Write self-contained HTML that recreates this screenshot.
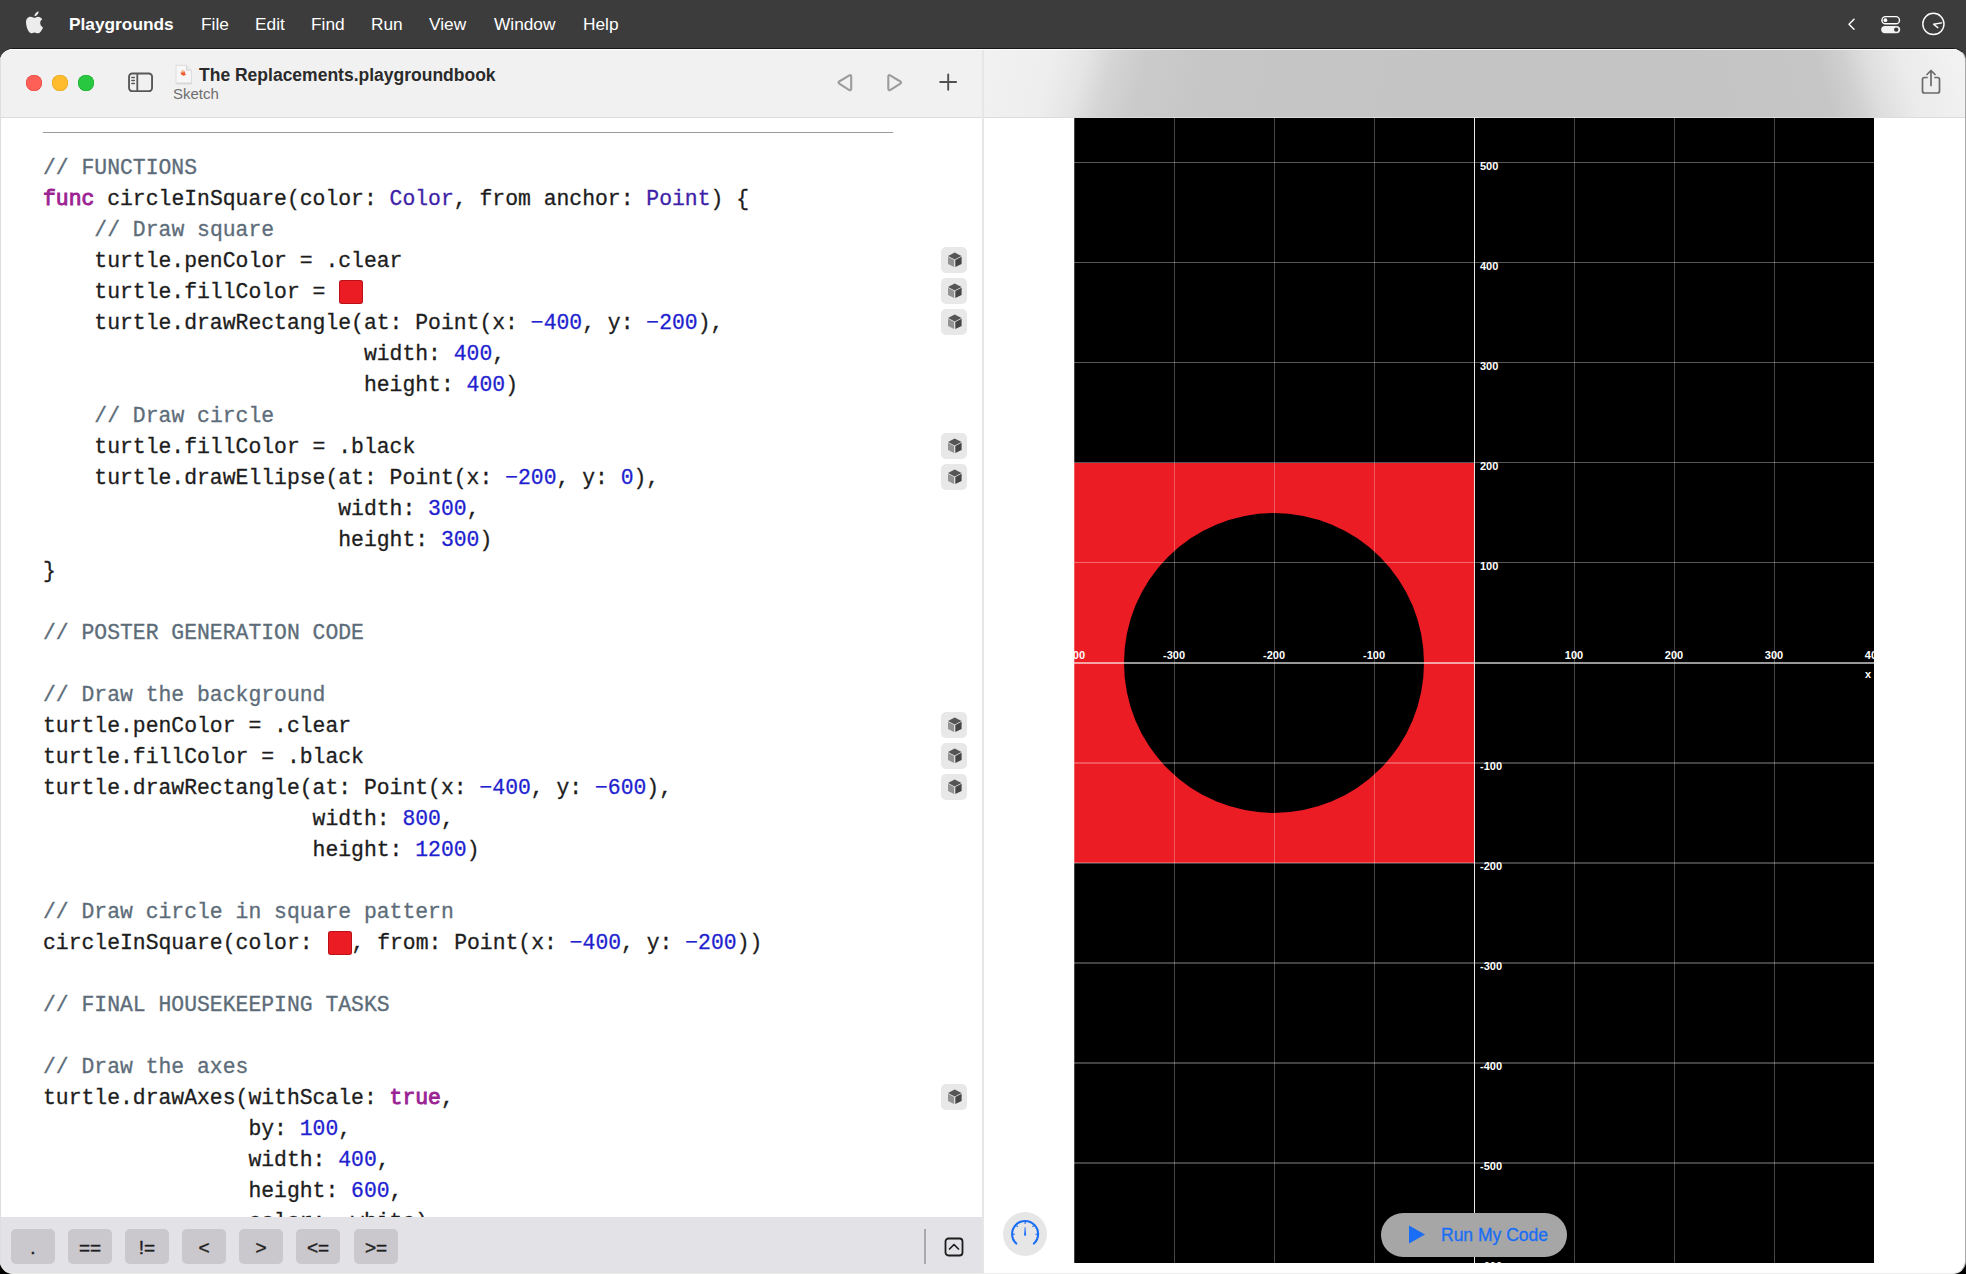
<!DOCTYPE html>
<html><head><meta charset="utf-8">
<style>
*{box-sizing:border-box;margin:0;padding:0}
html,body{width:1966px;height:1274px;overflow:hidden;background:#000}
body{position:relative;font-family:"Liberation Sans",sans-serif}
#menubar{position:absolute;left:0;top:0;width:1966px;height:62px;background:#3c3c3c;color:#fff;font-size:17.3px}
#menubar span.m{position:absolute;top:13px;line-height:22px}
#win{position:absolute;left:0;top:48px;width:1966px;height:1226px;background:#fff;border-radius:13px 13px 13px 13px;overflow:hidden;border-top:1px solid #161616;border-bottom:1px solid #ececec;border-right:1px solid #a8a8a8}
#titlebar{position:absolute;left:0;top:0;width:983px;height:69px;background:#f1f1f1;border-bottom:1px solid #dcdcdc;box-shadow:inset 0 1px 0 #fff}
#rtool{position:absolute;left:983px;top:0;width:983px;height:69px;border-bottom:1px solid #dcdcdc;box-shadow:inset 0 1px 0 rgba(255,255,255,.8);
 background:#c4c4c4;overflow:hidden}
.rg1{position:absolute;left:0;top:0;width:491px;height:68px;background:linear-gradient(106deg,#f1f1f1 10px,#eeeeee 68px,#e5e5e5 101px,#d5d5d5 127px,#cbcbcb 159px,#c6c6c6 221px,#c4c4c4 481px)}
.rg2{position:absolute;left:491px;top:0;width:492px;height:68px;background:linear-gradient(74deg,#c4c4c4 210px,#c6c6c6 345px,#d0d0d0 372px,#dedede 393px,#ebebeb 426px,#f2f2f2 482px)}
#divider{position:absolute;left:982px;top:1px;width:2px;height:1226px;background:#e6e6e6}
#code{position:absolute;left:0;top:69px;width:982px;height:1099px;background:#fff;overflow:hidden}
.ln{position:absolute;left:43px;height:31px;line-height:31px;font-family:"Liberation Mono",monospace;font-size:21.4px;color:#1d1d1d;white-space:pre;-webkit-text-stroke:0.3px currentColor}
.c{color:#5d6c79}.k{color:#9b2393;-webkit-text-stroke:0.9px #9b2393}.t{color:#3e1fa8}.n{color:#1f1fcf}
.sw{display:inline-block;width:23.5px;height:23.5px;background:#ec1c24;border-radius:3px;vertical-align:-5.7px;margin-left:1px;margin-right:1.2px;box-shadow:inset 0 0 0 1px rgba(90,0,0,.35)}
.cube{position:absolute;left:941px;width:26px;height:26px;background:#e8e8e8;border-radius:5px}
.cube svg{position:absolute;left:0;top:0}
#bbar{position:absolute;left:0;top:1168px;width:982px;height:58px;background:#e3e2e6}
.kb{position:absolute;top:12px;width:44px;height:35px;background:#cac8cd;border-radius:5px;font-family:"Liberation Sans",sans-serif;font-size:19px;color:#1d1d1d;text-align:center;line-height:37px;-webkit-text-stroke:0.4px #1d1d1d}
#canvas{position:absolute;left:1074px;top:69px;width:800px;height:1145px;background:#000;overflow:hidden}
.gv{position:absolute;top:0;width:1px;height:1146px;background:rgba(255,255,255,.27)}
.gh{position:absolute;left:0;width:800px;height:1px;background:rgba(255,255,255,.34)}
.lx{position:absolute;width:60px;text-align:center;color:#fff;font-size:11px;font-weight:bold;line-height:12px}
.ly{position:absolute;color:#fff;font-size:11px;font-weight:bold;line-height:12px;white-space:nowrap}
</style></head><body>
<svg width="0" height="0" style="position:absolute">
 <defs>
  <g id="cubeg">
   <polygon points="13.7,5.6 20.6,9.1 13.7,12.4 7,9.1" fill="#555"/>
   <polygon points="7,9.8 13.1,13 13.1,20 7,16.9" fill="#939393"/>
   <polygon points="20.6,9.8 14.3,13 14.3,20 20.6,16.9" fill="#454545"/>
  </g>
 </defs>
</svg>
<div id="menubar">
  <svg style="position:absolute;left:26px;top:10.7px" width="17" height="23" viewBox="0 0 17 23">
   <path fill="#ececec" d="M8.5 6.8 C7.3 6.8 6.2 5.7 4.4 5.7 C1.9 5.7 0 7.9 0 11.3 C0 15.3 2.5 22.2 5.0 22.2 C6.3 22.2 7.0 21.4 8.5 21.4 C10.0 21.4 10.7 22.2 12.0 22.2 C14.2 22.2 16.2 18.6 17 16.4 C15.2 15.5 14.2 13.9 14.2 12.0 C14.2 10.3 15.1 9.0 16.3 8.2 C15.3 6.6 13.6 5.7 12.2 5.7 C10.6 5.7 9.6 6.8 8.5 6.8 Z M8.4 5.3 C8.3 3.3 10.2 0.7 12.6 0.3 C12.8 2.6 10.8 5.2 8.4 5.3 Z"/>
  </svg>
  <span class="m" style="left:69px;font-weight:bold">Playgrounds</span>
  <span class="m" style="left:201px">File</span>
  <span class="m" style="left:255px">Edit</span>
  <span class="m" style="left:311px">Find</span>
  <span class="m" style="left:371px">Run</span>
  <span class="m" style="left:429px">View</span>
  <span class="m" style="left:494px">Window</span>
  <span class="m" style="left:583px">Help</span>
  <svg style="position:absolute;left:1845px;top:17px" width="12" height="14" viewBox="0 0 12 14"><path d="M9 2.3 L4 7.3 L9 12.3" fill="none" stroke="#fff" stroke-width="1.5" stroke-linecap="round" stroke-linejoin="round"/></svg>
  <svg style="position:absolute;left:1879px;top:15px" width="23" height="20" viewBox="0 0 23 20">
   <rect x="2.9" y="1.6" width="17.6" height="7.2" rx="3.6" fill="none" stroke="#fff" stroke-width="1.4"/>
   <circle cx="6.4" cy="5.2" r="1.9" fill="#fff"/>
   <rect x="2.2" y="10.9" width="19" height="7.4" rx="3.7" fill="#f2f2f2"/>
   <circle cx="17.2" cy="14.6" r="2.2" fill="#3c3c3c"/>
  </svg>
  <svg style="position:absolute;left:1920px;top:11px" width="27" height="27" viewBox="0 0 27 27">
   <circle cx="13.4" cy="12.9" r="10.6" fill="none" stroke="#fff" stroke-width="1.4"/>
   <path d="M21.6 11.9 L13.6 13.2 L17.8 16.6" fill="none" stroke="#fff" stroke-width="1.4" stroke-linecap="round" stroke-linejoin="round"/>
  </svg>
</div>
<div id="win">
  <div id="titlebar">
    <div style="position:absolute;left:26px;top:26px;width:15.6px;height:15.6px;border-radius:50%;background:#fe5f57;box-shadow:inset 0 0 0 .5px #e2463f"></div>
    <div style="position:absolute;left:52.4px;top:26px;width:15.6px;height:15.6px;border-radius:50%;background:#febc2e;box-shadow:inset 0 0 0 .5px #e1a116"></div>
    <div style="position:absolute;left:78px;top:26px;width:15.6px;height:15.6px;border-radius:50%;background:#28c840;box-shadow:inset 0 0 0 .5px #1aab29"></div>
    <svg style="position:absolute;left:127px;top:23px" width="27" height="21" viewBox="0 0 27 21">
     <rect x="2.05" y="1.55" width="23" height="17.6" rx="3.2" fill="none" stroke="#585858" stroke-width="1.9"/>
     <line x1="10.3" y1="1.6" x2="10.3" y2="19.1" stroke="#585858" stroke-width="1.8"/>
     <g stroke="#585858" stroke-width="1.5" stroke-linecap="round"><line x1="4.9" y1="5.5" x2="7.3" y2="5.5"/><line x1="4.9" y1="8.5" x2="7.3" y2="8.5"/><line x1="4.9" y1="11.4" x2="7.3" y2="11.4"/></g>
    </svg>
    <svg style="position:absolute;left:174px;top:14px" width="19" height="22" viewBox="0 0 19 22">
     <path d="M2 2.3 H12.5 L17.5 7.3 V21 H2 Z" fill="#f7f7f7" stroke="#dddddd" stroke-width="1"/>
     <path d="M12.5 2.3 V7.3 H17.5" fill="#e6e6e6" stroke="#d5d5d5" stroke-width="0.8"/>
     <rect x="2.5" y="19.6" width="14.5" height="1.2" fill="#d0d0d0"/>
     <path d="M6.3 9.6 Q8 11.6 11 10.2 Q10.6 7.8 9.6 6.9 Q10.9 9.6 9.6 10 Q8 9.8 6.3 9.6 Z M6.3 9.6 Q7.6 12.8 10.2 12.6 Q12.2 12.2 12.1 10.6 Q11.2 11.6 10 11.4 Q7.8 11.2 6.3 9.6 Z" fill="#ee3a24"/>
     <circle cx="9.3" cy="10.6" r="1.9" fill="#f25a2a" opacity=".8"/>
     <circle cx="8.6" cy="8.4" r="1.3" fill="#f5a05a" opacity=".7"/>
    </svg>
    <div style="position:absolute;left:199px;top:15px;font-size:17.5px;font-weight:bold;color:#2a2a2a;line-height:22px;white-space:nowrap">The Replacements.playgroundbook</div>
    <div style="position:absolute;left:173px;top:36px;font-size:15px;color:#6e6e6e;line-height:18px">Sketch</div>
    <svg style="position:absolute;left:835px;top:23px" width="20" height="21" viewBox="0 0 20 21"><path d="M16.20 4.80 Q16.20 2.20 13.98 3.55 L4.62 9.25 Q2.40 10.60 4.61 11.98 L13.99 17.82 Q16.20 19.20 16.20 16.60 Z" fill="none" stroke="#9c9c9c" stroke-width="2.1" stroke-linejoin="round"/></svg>
    <svg style="position:absolute;left:885px;top:23px" width="20" height="21" viewBox="0 0 20 21"><path d="M3.30 4.80 Q3.30 2.20 5.53 3.54 L14.97 9.26 Q17.20 10.60 14.99 11.97 L5.51 17.83 Q3.30 19.20 3.30 16.60 Z" fill="none" stroke="#9c9c9c" stroke-width="2.1" stroke-linejoin="round"/></svg>
    <svg style="position:absolute;left:937px;top:23px" width="22" height="21" viewBox="0 0 22 21"><path d="M11.2 2.4 V17.8 M3.2 10 H19.1" fill="none" stroke="#505050" stroke-width="1.9" stroke-linecap="round"/></svg>
  </div>
  <div id="rtool"><div class="rg1"></div><div class="rg2"></div><div style="position:absolute;left:0;top:0;width:983px;height:1px;background:rgba(255,255,255,.85)"></div>
    <svg style="position:absolute;left:936px;top:19px" width="24" height="28" viewBox="0 0 24 28">
     <path d="M8 9.5 H5.5 Q3.5 9.5 3.5 11.5 V23 Q3.5 25 5.5 25 H18.5 Q20.5 25 20.5 23 V11.5 Q20.5 9.5 18.5 9.5 H16" fill="none" stroke="#6a6a6a" stroke-width="1.7" stroke-linecap="round"/>
     <path d="M12 17.5 V2.5 M8 6.5 L12 2.5 L16 6.5" fill="none" stroke="#6a6a6a" stroke-width="1.7" stroke-linecap="round" stroke-linejoin="round"/>
    </svg>
  </div>
  <div id="code">
<div class="sep" style="position:absolute;left:43px;top:14px;width:850px;height:1px;background:#9a9a9a"></div>
<div class="ln" style="top:35.3px"><span class="c">// FUNCTIONS</span></div>
<div class="ln" style="top:66.3px"><span class="k">func</span> circleInSquare(color: <span class="t">Color</span>, from anchor: <span class="t">Point</span>) {</div>
<div class="ln" style="top:97.3px">    <span class="c">// Draw square</span></div>
<div class="ln" style="top:128.3px">    turtle.penColor = .clear</div>
<div class="cube" style="top:129.1px"><svg width="26" height="26" viewBox="0 0 26 26"><use href="#cubeg"/></svg></div>
<div class="ln" style="top:159.3px">    turtle.fillColor = <span class="sw"></span></div>
<div class="cube" style="top:160.1px"><svg width="26" height="26" viewBox="0 0 26 26"><use href="#cubeg"/></svg></div>
<div class="ln" style="top:190.3px">    turtle.drawRectangle(at: Point(x: <span class="n">−400</span>, y: <span class="n">−200</span>),</div>
<div class="cube" style="top:191.1px"><svg width="26" height="26" viewBox="0 0 26 26"><use href="#cubeg"/></svg></div>
<div class="ln" style="top:221.3px">                         width: <span class="n">400</span>,</div>
<div class="ln" style="top:252.3px">                         height: <span class="n">400</span>)</div>
<div class="ln" style="top:283.3px">    <span class="c">// Draw circle</span></div>
<div class="ln" style="top:314.3px">    turtle.fillColor = .black</div>
<div class="cube" style="top:315.1px"><svg width="26" height="26" viewBox="0 0 26 26"><use href="#cubeg"/></svg></div>
<div class="ln" style="top:345.3px">    turtle.drawEllipse(at: Point(x: <span class="n">−200</span>, y: <span class="n">0</span>),</div>
<div class="cube" style="top:346.1px"><svg width="26" height="26" viewBox="0 0 26 26"><use href="#cubeg"/></svg></div>
<div class="ln" style="top:376.3px">                       width: <span class="n">300</span>,</div>
<div class="ln" style="top:407.3px">                       height: <span class="n">300</span>)</div>
<div class="ln" style="top:438.3px">}</div>
<div class="ln" style="top:500.3px"><span class="c">// POSTER GENERATION CODE</span></div>
<div class="ln" style="top:562.3px"><span class="c">// Draw the background</span></div>
<div class="ln" style="top:593.3px">turtle.penColor = .clear</div>
<div class="cube" style="top:594.1px"><svg width="26" height="26" viewBox="0 0 26 26"><use href="#cubeg"/></svg></div>
<div class="ln" style="top:624.3px">turtle.fillColor = .black</div>
<div class="cube" style="top:625.1px"><svg width="26" height="26" viewBox="0 0 26 26"><use href="#cubeg"/></svg></div>
<div class="ln" style="top:655.3px">turtle.drawRectangle(at: Point(x: <span class="n">−400</span>, y: <span class="n">−600</span>),</div>
<div class="cube" style="top:656.1px"><svg width="26" height="26" viewBox="0 0 26 26"><use href="#cubeg"/></svg></div>
<div class="ln" style="top:686.3px">                     width: <span class="n">800</span>,</div>
<div class="ln" style="top:717.3px">                     height: <span class="n">1200</span>)</div>
<div class="ln" style="top:779.3px"><span class="c">// Draw circle in square pattern</span></div>
<div class="ln" style="top:810.3px">circleInSquare(color: <span class="sw" style="margin-left:2.6px;margin-right:0"></span>, from: Point(x: <span class="n">−400</span>, y: <span class="n">−200</span>))</div>
<div class="ln" style="top:872.3px"><span class="c">// FINAL HOUSEKEEPING TASKS</span></div>
<div class="ln" style="top:934.3px"><span class="c">// Draw the axes</span></div>
<div class="ln" style="top:965.3px">turtle.drawAxes(withScale: <span class="k">true</span>,</div>
<div class="cube" style="top:966.1px"><svg width="26" height="26" viewBox="0 0 26 26"><use href="#cubeg"/></svg></div>
<div class="ln" style="top:996.3px">                by: <span class="n">100</span>,</div>
<div class="ln" style="top:1027.3px">                width: <span class="n">400</span>,</div>
<div class="ln" style="top:1058.3px">                height: <span class="n">600</span>,</div>
<div class="ln" style="top:1089.3px">                color: .white)</div>
  </div>
  <div id="bbar">
    <div class="kb" style="left:11px">.</div>
    <div class="kb" style="left:68px">==</div>
    <div class="kb" style="left:125px">!=</div>
    <div class="kb" style="left:182px">&lt;</div>
    <div class="kb" style="left:239px">&gt;</div>
    <div class="kb" style="left:296px">&lt;=</div>
    <div class="kb" style="left:354px">&gt;=</div>
    <div style="position:absolute;left:924px;top:12px;width:1.5px;height:35px;background:#a9a8ad"></div>
    <svg style="position:absolute;left:943px;top:20px" width="22" height="20" viewBox="0 0 22 20">
     <rect x="2.5" y="1.5" width="17" height="17" rx="3" fill="none" stroke="#1d1d1d" stroke-width="1.8"/>
     <path d="M6.5 12 L11 7.5 L15.5 12" fill="none" stroke="#1d1d1d" stroke-width="1.7" stroke-linecap="round" stroke-linejoin="round"/>
    </svg>
  </div>
  <div id="canvas">
<div style="position:absolute;left:0;top:344.5px;width:400px;height:400px;background:#ec1c24"></div>
<div style="position:absolute;left:50px;top:394.5px;width:300px;height:300px;border-radius:50%;background:#000"></div>
<div class="gv" style="left:-0.5px"></div>
<div class="gv" style="left:99.5px"></div>
<div class="gv" style="left:199.5px"></div>
<div class="gv" style="left:299.5px"></div>
<div class="gv" style="left:499.5px"></div>
<div class="gv" style="left:599.5px"></div>
<div class="gv" style="left:699.5px"></div>
<div class="gv" style="left:799.5px"></div>
<div class="gh" style="top:1043.5px;height:2px;background:rgba(255,255,255,.26)"></div>
<div class="gh" style="top:943.5px;height:2px;background:rgba(255,255,255,.26)"></div>
<div class="gh" style="top:843.5px;height:2px;background:rgba(255,255,255,.26)"></div>
<div class="gh" style="top:743.5px;height:2px;background:rgba(255,255,255,.26)"></div>
<div class="gh" style="top:643.5px;height:2px;background:rgba(255,255,255,.26)"></div>
<div class="gh" style="top:444.0px"></div>
<div class="gh" style="top:344.0px"></div>
<div class="gh" style="top:244.0px"></div>
<div class="gh" style="top:144.0px"></div>
<div class="gh" style="top:44.0px"></div>
<div style="position:absolute;left:399.5px;top:0;width:1px;height:1146px;background:rgba(255,255,255,.9)"></div>
<div style="position:absolute;left:0;top:543.5px;width:800px;height:2px;background:rgba(255,255,255,.6)"></div>
<div class="lx" style="left:-30.0px;top:530.5px">-400</div>
<div class="lx" style="left:70.0px;top:530.5px">-300</div>
<div class="lx" style="left:170.0px;top:530.5px">-200</div>
<div class="lx" style="left:270.0px;top:530.5px">-100</div>
<div class="lx" style="left:470.0px;top:530.5px">100</div>
<div class="lx" style="left:570.0px;top:530.5px">200</div>
<div class="lx" style="left:670.0px;top:530.5px">300</div>
<div class="lx" style="left:770.0px;top:530.5px">400</div>
<div class="ly" style="left:406.0px;top:41.5px">500</div>
<div class="ly" style="left:406.0px;top:141.5px">400</div>
<div class="ly" style="left:406.0px;top:241.5px">300</div>
<div class="ly" style="left:406.0px;top:341.5px">200</div>
<div class="ly" style="left:406.0px;top:441.5px">100</div>
<div class="ly" style="left:406.0px;top:641.5px">-100</div>
<div class="ly" style="left:406.0px;top:741.5px">-200</div>
<div class="ly" style="left:406.0px;top:841.5px">-300</div>
<div class="ly" style="left:406.0px;top:941.5px">-400</div>
<div class="ly" style="left:406.0px;top:1041.5px">-500</div>
<div class="ly" style="left:406.0px;top:1141.5px">-600</div>
<div class="lx" style="left:791px;top:549.5px;width:10px;text-align:left">x</div>
  </div>
  <div id="divider"></div>
  <div style="position:absolute;left:0;top:0;width:1px;height:1226px;background:#dedede"></div>
  <div style="position:absolute;left:1003px;top:1163px;width:44px;height:44px;border-radius:50%;background:#e6e6e6"></div>
  <svg style="position:absolute;left:1010px;top:1170px" width="30" height="30" viewBox="0 0 30 30">
   <path d="M6.3 24.6 A13 13 0 1 1 23.9 24.6" fill="none" stroke="#1a6ef5" stroke-width="2.1" stroke-linecap="round"/>
   <path d="M14.7 8.2 L15.5 8.2 L16.1 16.2 Q15.1 17.4 14.1 16.2 Z" fill="#1a6ef5"/>
   <g stroke="#1a6ef5" stroke-width="1.1"><path d="M4.80 15.20 L2.90 15.20"/><path d="M7.82 7.92 L6.47 6.57"/><path d="M15.10 4.90 L15.10 3.00"/><path d="M22.38 7.92 L23.73 6.57"/><path d="M25.40 15.20 L27.30 15.20"/></g>
  </svg>
  <div style="position:absolute;left:1381px;top:1164px;width:186px;height:44px;border-radius:22px;background:#a6a6a6"></div>
  <svg style="position:absolute;left:1406px;top:1175px" width="22" height="22" viewBox="0 0 22 22"><path d="M3 1.5 L19 10.5 L3 19.5 Z" fill="#1a6ef5"/></svg>
  <div style="position:absolute;left:1441px;top:1175px;font-size:17.5px;color:#1a6ef5;line-height:22px;white-space:nowrap;-webkit-text-stroke:0.3px #1a6ef5">Run My Code</div>
</div>
</body></html>
